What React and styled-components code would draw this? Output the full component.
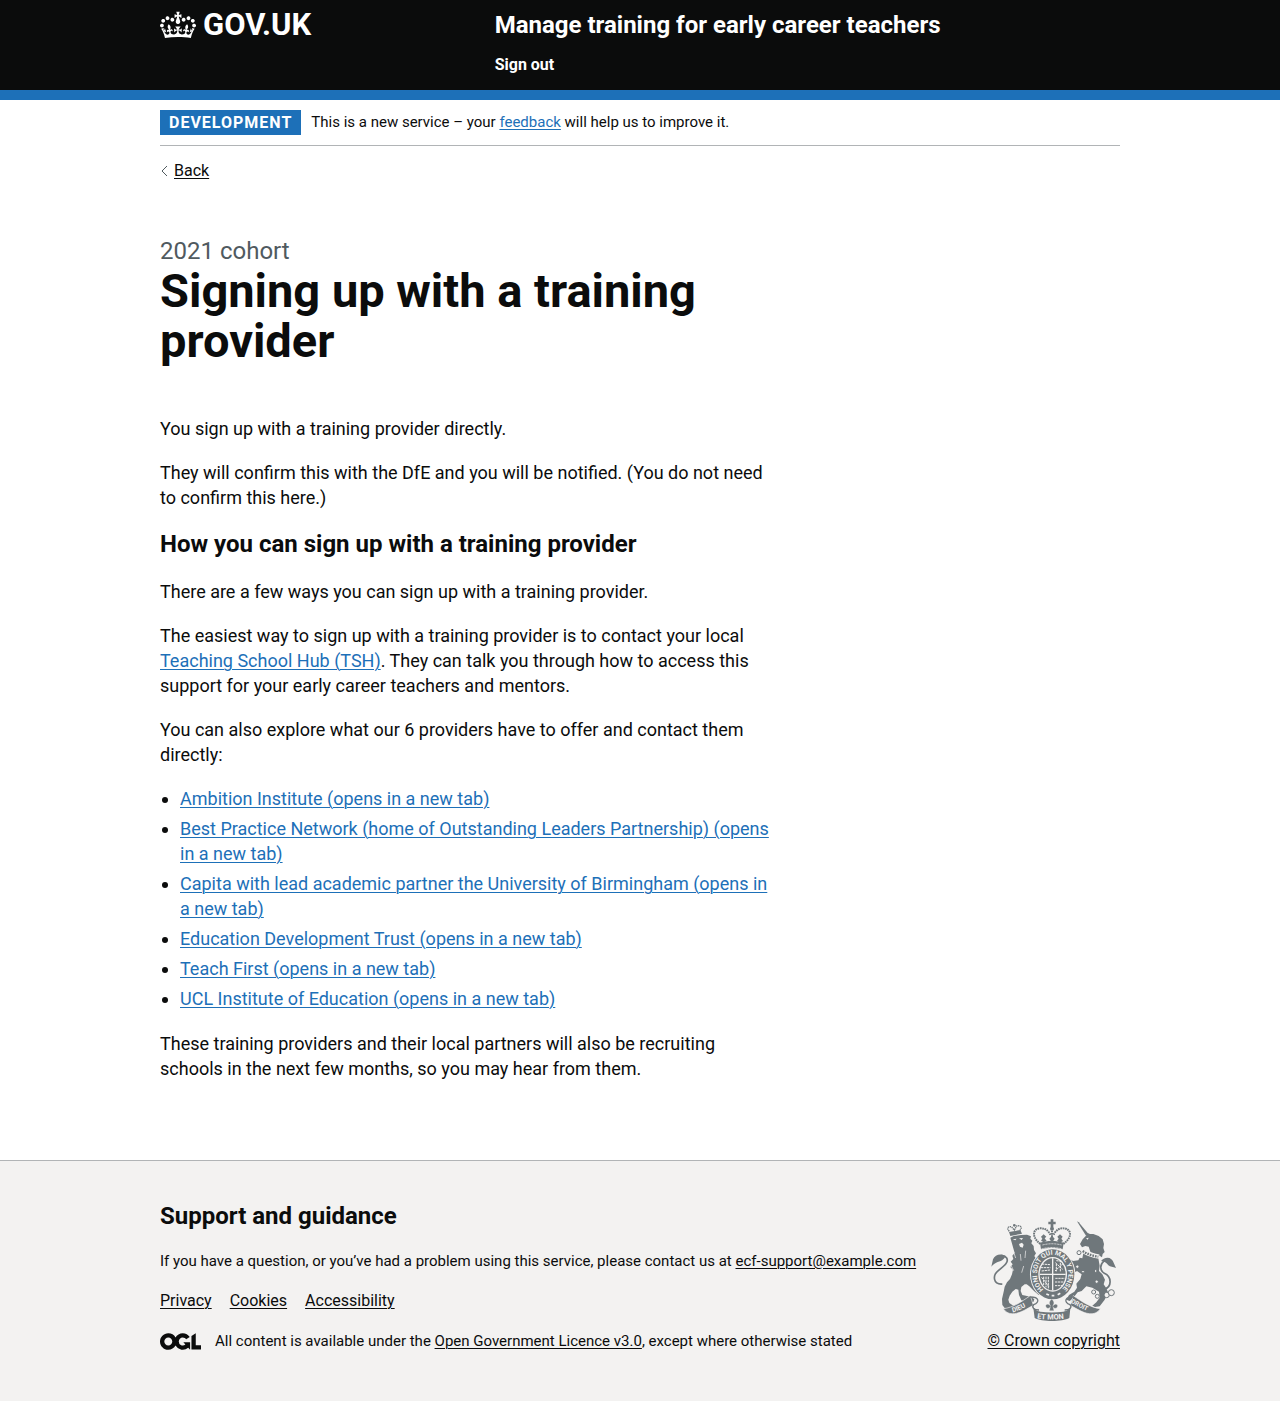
import React from "react";
import styled, { createGlobalStyle, css } from "styled-components";

const color = {
  text: "#0b0c0c",
  secondary: "#505a5f",
  link: "#1d70b8",
  border: "#b1b4b6",
  footer: "#f3f2f1",
  crest: "#6f777b",
  white: "#ffffff",
};

const GlobalStyle = createGlobalStyle`
  body {
    margin: 0;
    background: ${color.footer};
    color: ${color.text};
    font-family: Roboto, "Liberation Sans", sans-serif;
    -webkit-font-smoothing: antialiased;
  }
`;

const Container = styled.div`
  max-width: 960px;
  margin: 0 auto;
  @media (max-width: 1020px) {
    margin: 0 30px;
  }
`;

const Link = styled.a`
  color: ${(p) => (p.$dark ? color.text : color.link)};
  text-decoration: underline;
  text-decoration-thickness: 1px;
  text-underline-offset: 2px;
`;

/* Header */

const Header = styled.header`
  background: ${color.text};
  border-bottom: 10px solid ${color.link};
  color: ${color.white};
`;

const HeaderInner = styled(Container)`
  display: grid;
  grid-template-columns: 1fr 2fr;
  column-gap: 22px;
  padding: 10px 0 13px;
`;

const HomeLink = styled.a`
  display: flex;
  align-items: center;
  align-self: start;
  gap: 7px;
  height: 30px;
  color: inherit;
  font-size: 31px;
  font-weight: 700;
  line-height: 30px;
  text-decoration: none;
`;

const ServiceName = styled.a`
  display: block;
  margin-bottom: 12px;
  color: inherit;
  font-size: 24px;
  font-weight: 700;
  line-height: 30px;
  text-decoration: none;
`;

const HeaderNav = styled.nav`
  line-height: 25px;
  a {
    color: inherit;
    font-size: 16px;
    font-weight: 700;
    text-decoration: none;
  }
`;

/* Page */

const Page = styled.div`
  background: ${color.white};
`;

const PhaseBanner = styled.div`
  display: flex;
  align-items: flex-start;
  gap: 10px;
  padding: 10px 0;
  border-bottom: 1px solid ${color.border};
  font-size: 15px;
  line-height: 24px;
`;

const Tag = styled.strong`
  padding: 3px 9px 2px;
  background: ${color.link};
  color: ${color.white};
  font-size: 16px;
  font-weight: 700;
  letter-spacing: 1px;
  line-height: 20px;
  text-transform: uppercase;
`;

const BackLink = styled.a`
  display: inline-flex;
  align-items: center;
  gap: 6px;
  margin-top: 15px;
  color: ${color.text};
  font-size: 16px;
  line-height: 20px;
  text-decoration: none;
  svg {
    display: block;
  }
  span {
    text-decoration: underline;
    text-decoration-thickness: 1px;
    text-underline-offset: 2px;
  }
`;

const Main = styled.main`
  max-width: 620px;
  padding: 55px 0 60px;
`;

const Caption = styled.span`
  display: block;
  color: ${color.secondary};
  font-size: 24px;
  line-height: 30px;
`;

const Title = styled.h1`
  margin: 0 0 50px;
  font-size: 47px;
  font-weight: 700;
  line-height: 50px;
`;

const Heading = styled.h2`
  margin: 0 0 20px;
  font-size: 24px;
  font-weight: 700;
  line-height: 30px;
`;

const body = css`
  font-size: 18px;
  line-height: 25px;
`;

const Paragraph = styled.p`
  ${body}
  margin: 0 0 19px;
`;

const List = styled.ul`
  ${body}
  margin: 0 0 20px;
  padding: 0 0 0 20px;
`;

const Item = styled.li`
  & + & {
    margin-top: 5px;
  }
`;

/* Footer */

const Footer = styled.footer`
  border-top: 1px solid ${color.border};
  background: ${color.footer};
  padding: 40px 0 50px;
  font-size: 15px;
  line-height: 20px;
`;

const FooterInner = styled(Container)`
  display: flex;
  align-items: flex-end;
  justify-content: space-between;
  gap: 30px;
`;

const FooterText = styled.p`
  margin: 0 0 20px;
`;

const FooterLinks = styled.ul`
  display: flex;
  gap: 18px;
  margin: 0 0 20px;
  padding: 0;
  font-size: 16px;
  list-style: none;
`;

const Licence = styled.div`
  display: flex;
  align-items: center;
  gap: 14px;
`;

const Copyright = styled(Link)`
  display: flex;
  flex-direction: column;
  align-items: center;
  gap: 10px;
  font-size: 16px;
  white-space: nowrap;
`;

function Crown() {
  return (
    <svg width="36" height="30" viewBox="0 0 132 97" aria-hidden="true">
      <path
        fill="currentColor"
        fillRule="evenodd"
        d="M25 30.2c3.5 1.5 7.7-.2 9.1-3.7 1.5-3.6-.2-7.8-3.9-9.2-3.6-1.4-7.6.3-9.1 3.9-1.4 3.5.3 7.5 3.9 9zM9 39.5c3.6 1.5 7.8-.2 9.2-3.7 1.5-3.6-.2-7.8-3.9-9.1-3.6-1.5-7.6.2-9.1 3.8-1.4 3.5.3 7.5 3.8 9zM4.4 57.2c3.5 1.5 7.7-.2 9.1-3.8 1.5-3.6-.2-7.7-3.9-9.1-3.5-1.5-7.6.3-9.1 3.8-1.4 3.5.3 7.6 3.9 9.1zm38.3-21.4c3.5 1.5 7.7-.2 9.1-3.8 1.5-3.6-.2-7.7-3.9-9.1-3.6-1.5-7.6.3-9.1 3.8-1.3 3.6.4 7.7 3.9 9.1zm64.4-5.6c-3.6 1.5-7.8-.2-9.1-3.7-1.5-3.6.2-7.8 3.8-9.2 3.6-1.4 7.7.3 9.2 3.9 1.3 3.5-.4 7.5-3.9 9zm15.9 9.3c-3.6 1.5-7.7-.2-9.1-3.7-1.5-3.6.2-7.8 3.7-9.1 3.6-1.5 7.7.2 9.2 3.8 1.5 3.5-.3 7.5-3.8 9zm4.7 17.7c-3.6 1.5-7.8-.2-9.2-3.8-1.5-3.6.2-7.7 3.9-9.1 3.6-1.5 7.7.3 9.2 3.8 1.3 3.5-.4 7.6-3.9 9.1zM89.3 35.8c-3.6 1.5-7.8-.2-9.2-3.8-1.4-3.6.2-7.7 3.9-9.1 3.6-1.5 7.7.3 9.2 3.8 1.4 3.6-.3 7.7-3.9 9.1zM69.7 17.7l8.9 4.7V9.3l-8.9 2.8c-.2-.3-.5-.6-.9-.9L72.4 0H59.6l3.5 11.2c-.3.3-.6.5-.9.9l-8.8-2.8v13.1l8.8-4.7c.3.3.6.7.9.9l-5 15.4v.1c-.2.8-.4 1.6-.4 2.4 0 4.1 3.1 7.5 7 8.1h.2c.3 0 .7.1 1 .1.4 0 .7 0 1-.1h.2c4-.6 7.1-4.1 7.1-8.1 0-.8-.1-1.7-.4-2.4V34l-5.1-15.4c.4-.2.7-.6 1-.9zM66 92.8c16.9 0 32.8 1.1 47.1 3.2 4-16.9 8.9-26.7 14-33.5l-9.6-3.4c1 4.9 1.1 7.2 0 10.2-1.5-1.4-3-4.3-4.2-8.7L108.6 76c2.8-2 5-3.2 7.5-3.3-4.4 9.4-10 11.9-13.6 11.2-4.3-.8-6.3-4.6-5.6-7.9 1-4.7 5.7-5.9 8-.5 4.3-8.7-3-11.4-7.6-8.8 7.1-7.2 7.9-13.5 2.1-21.1-8 6.1-8.1 12.3-4.5 20.8-4.7-5.4-12.1-2.5-9.5 6.2 3.4-5.2 7.9-2 7.2 3.1-.6 4.3-6.4 7.8-13.5 7.2-10.3-.9-10.9-8-11.2-13.8 2.5-.5 7.1 1.8 11 7.3L80.2 60c-4.1 4.4-8 5.3-12.3 5.4 1.4-4.4 8-11.6 8-11.6H55.5s6.4 7.2 7.9 11.6c-4.2-.1-8-1-12.3-5.4l1.4 16.4c3.9-5.5 8.5-7.7 10.9-7.3-.3 5.8-.9 12.8-11.1 13.8-7.2.6-12.9-2.9-13.5-7.2-.7-5 3.8-8.3 7.1-3.1 2.7-8.7-4.6-11.6-9.4-6.2 3.7-8.5 3.6-14.7-4.6-20.8-5.8 7.6-5 13.9 2.2 21.1-4.7-2.6-11.9.1-7.7 8.8 2.3-5.5 7.1-4.2 8.1.5.7 3.3-1.3 7.1-5.7 7.9-3.5.7-9-1.8-13.5-11.2 2.5.1 4.7 1.3 7.5 3.3l-4.7-15.4c-1.2 4.4-2.7 7.2-4.3 8.7-1.1-3-.9-5.3 0-10.2l-9.5 3.4c5 6.9 9.9 16.7 14 33.5 14.8-2.1 30.8-3.2 47.7-3.2z"
      />
    </svg>
  );
}

function OglLogo() {
  return (
    <svg width="41" height="17" viewBox="0 0 483.2 195.7" role="img" aria-label="Open Government Licence">
      <path
        fill="currentColor"
        d="M421.5 142.8V.1l-50.7 32.3v161.1h112.4v-50.7zm-122.3-9.6A47.12 47.12 0 0 1 221 97.8c0-26 21.1-47.1 47.1-47.1 16.7 0 31.4 8.7 39.7 21.8l42.7-27.2A97.63 97.63 0 0 0 268.1 0c-36.5 0-68.3 20.1-85.1 49.7A98 98 0 0 0 97.8 0C43.9 0 0 43.9 0 97.8s43.9 97.8 97.8 97.8c36.5 0 68.3-20.1 85.1-49.7a97.76 97.76 0 0 0 149.6 25.4l19.4 22.2h3v-87.8h-80l24.3 27.5zM97.8 145c-26 0-47.1-21.1-47.1-47.1s21.1-47.1 47.1-47.1 47.1 21.1 47.1 47.1S123.8 145 97.8 145"
      />
    </svg>
  );
}

function Crest() {
  const c = color.crest;
  const bg = color.footer;
  return (
    <svg width="125" height="102" viewBox="36 41 375 306" fill={c} aria-hidden="true">
      {/* lion */}
      <path d="M94 97l10-5 22-3 18-1 12 5-2 7 6 6-3 8 7 8 1 12 6 10-5 8 6 10-2 8 4 12-6 24 0 26 6 12 12 12 10 6-3 8-14-1-14-12-14-14-8-6-6 0-10 8-2 12 5 12 14 3 14 4 8 6-3 8-20-1-16-4-7-16-2-16-8-2-10 8-8 12-4 12 3 10 13 9 11 7-4 6-18 0-16-7-7-9-1-18 5-22 3-15 7-13 9-10 6-14 3-14-8-8 7-8-6-8 8-8-3-10 7-8z" />
      <path d="M101 102l12-2-4 5zM120 99l12-1-4 6zM120 116l9-4 5 6-3 9-8-3z" fill={bg} />
      <path d="M104 140l6 18M124 146l2 20M140 136l-2 22M96 180l8 16M134 182l-6 20" fill="none" stroke={bg} strokeWidth="2" />
      <path d="M70 236C42 238 40 210 58 196C78 180 90 170 83 158C77 149 63 148 52 158" fill="none" stroke={c} strokeWidth="5" />
      <path d="M80 153C66 142 48 148 42 162L37 184C43 177 50 172 56 170C66 168 74 164 80 153z" />
      {/* lion's crown */}
      <path d="M90 80l34-6 5 11-35 7z" />
      <path d="M91 78C82 69 88 61 98 65L106 74L113 62C125 59 131 66 123 74" fill="none" stroke={c} strokeWidth="4" strokeDasharray="4 2" />
      <circle cx="106" cy="60" r="4" />
      {/* unicorn */}
      <path d="M294 48l5 3 29 34-7 6z" />
      <path d="M303 116l8-14 10-11 5-8 7 3 10 0 16 6 12 10 4 14-2 12 4 12-6 6-2 10-12-8-22-6-6-18-10-2-10 4z" />
      <path d="M321 99l8-2-3 6z" fill={bg} />
      <path d="M314 139l24 6 20 14 4 22-2 16 10 10 8 16-4 14 8 12 6 14-12 22-14 18-14 2-8-4 12-10 10-14-2-18-20-12-18-4-14 14-12 4-14 18-10 8-10-4 8-14 16-10 8-12-2-12 12-14 4-14-14-10-10 6-10-8-10 2-8-8 12-2 8-14-12 2-6-10 14-4 10 6 16-2 4-8 8 2z" />
      <path d="M311 136C326 146 344 151 360 154" fill="none" stroke={bg} strokeWidth="13" />
      <path d="M311 137C326 147 342 152 358 154" fill="none" stroke={c} strokeWidth="7" strokeDasharray="5 3" />
      <g fill={bg} stroke={c} strokeWidth="3">
        <circle cx="300" cy="142" r="6" />
        <circle cx="295" cy="184" r="5" />
        <circle cx="312" cy="199" r="4" />
        <circle cx="350" cy="197" r="4" />
        <circle cx="353" cy="229" r="5" />
        <circle cx="344" cy="260" r="6" />
        <circle cx="355" cy="273" r="6" />
        <circle cx="383" cy="269" r="8" />
        <circle cx="397" cy="262" r="9" />
      </g>
      <path d="M376 252C400 244 398 214 376 204C362 196 362 178 374 168C384 160 396 166 398 176" fill="none" stroke={c} strokeWidth="5" />
      <path d="M366 167C382 150 400 158 404 172L411 188C402 184 394 186 388 180C382 172 376 168 366 167z" />
      {/* garter and shield */}
      <ellipse cx="221" cy="207" rx="68" ry="77" fill={bg} />
      <ellipse cx="221" cy="207" rx="65" ry="75" />
      <ellipse cx="221" cy="207" rx="43" ry="52" fill={bg} />
      <ellipse cx="221" cy="207" rx="39" ry="48" />
      <path
        d="M188 176l25 2M186 187h28M188 197l25-3M229 172l22 20M252 175l-24 22M232 166l18 2M244 164v34M232 176v22M188 216l22 28M194 214v26M201 214v32M208 214v38M229 219h28M228 230h27M228 241h22"
        fill="none"
        stroke={bg}
        strokeWidth="3"
        strokeDasharray="7 2"
      />
      <path d="M221 159v96M182 207h78" fill="none" stroke={bg} strokeWidth="4" />
      <path id="garter" d="M194 252A47 57 0 1 1 248 252" fill="none" />
      <text fill={bg} fontSize="20" fontWeight="700">
        <textPath href="#garter">HONI SOIT QUI MAL Y PENSE</textPath>
      </text>
      <path d="M202 266l8 3M218 271l8 0M236 268l8-4" stroke={bg} strokeWidth="5" />
      {/* central crown */}
      <path d="M215 42h8v7h7v8h-7v9h-8v-9h-7v-8h7z" />
      <circle cx="219" cy="70" r="6" />
      <path
        d="M184 116C154 92 164 69 184 69C201 68 211 80 215 90M253 116C285 92 274 69 253 69C237 68 227 80 223 90M219 76v26"
        fill="none"
        stroke={c}
        strokeWidth="6"
        strokeDasharray="5 2"
      />
      <path d="M186 94l8-7 8 7-5 5 6 8-9 4-8-5 4-6zM235 94l8-7 8 7-4 6 5 7-9 5-9-5 5-7zM211 100l8-9 8 9-4 6 5 8h-18l5-8z" />
      <path d="M183 112C204 105 232 105 254 112L251 132C230 126 208 126 186 132z" />
      <path d="M190 119C210 114 228 114 248 119M187 131C208 125 230 125 250 131" fill="none" stroke={bg} strokeWidth="2" strokeDasharray="7 2" />
      {/* motto ribbon */}
      <g stroke={bg} strokeWidth="2">
        <path d="M73 310C102 307 126 290 154 271L163 300C142 311 126 323 106 325C92 327 80 321 73 310z" />
        <path d="M364 310C335 307 311 290 283 271L274 300C295 311 311 323 331 325C345 327 357 321 364 310z" />
      </g>
      <path d="M152 275C180 274 184 290 164 298C158 304 162 314 180 314M285 275C257 274 253 290 273 298C279 304 275 314 257 314" fill="none" stroke={c} strokeWidth="4" />
      <path d="M162 300C164 312 172 317 184 319C206 322 231 322 253 319C265 317 273 312 275 300L271 338C250 350 188 350 167 338z" />
      <path id="motto-left" d="M101 321C122 316 138 305 160 294" fill="none" />
      <path id="motto-mid" d="M174 339C198 344 240 344 268 338" fill="none" />
      <path id="motto-right" d="M275 292C298 303 314 315 338 322" fill="none" />
      <g fill={bg} fontWeight="700">
        <text fontSize="20"><textPath href="#motto-left">DIEU</textPath></text>
        <text fontSize="22"><textPath href="#motto-mid">ET MON</textPath></text>
        <text fontSize="19"><textPath href="#motto-right">DROIT</textPath></text>
      </g>
      {/* fleur-de-lis */}
      <path
        d="M218 281C207 291 212 298 215 302C207 292 197 297 201 305C204 311 212 309 214 304L211 316h14L222 304C224 309 232 311 235 305C239 297 229 292 221 302C224 298 229 291 218 281z"
        stroke={bg}
        strokeWidth="1"
      />
    </svg>
  );
}

const providers = [
  "Ambition Institute",
  "Best Practice Network (home of Outstanding Leaders Partnership)",
  "Capita with lead academic partner the University of Birmingham",
  "Education Development Trust",
  "Teach First",
  "UCL Institute of Education",
];

export default function App() {
  return (
    <>
      <GlobalStyle />
      <Header>
        <HeaderInner>
          <HomeLink href="#">
            <Crown />
            <span>GOV.UK</span>
          </HomeLink>
          <div>
            <ServiceName href="#">Manage training for early career teachers</ServiceName>
            <HeaderNav>
              <a href="#">Sign out</a>
            </HeaderNav>
          </div>
        </HeaderInner>
      </Header>

      <Page>
        <Container>
          <PhaseBanner>
            <Tag>Development</Tag>
            <span>
              This is a new service – your <Link href="#">feedback</Link> will help us to improve it.
            </span>
          </PhaseBanner>
          <BackLink href="#">
            <svg width="8" height="12" viewBox="0 0 8 12" fill="none" stroke={color.secondary} aria-hidden="true">
              <path d="M7 1L2 6l5 5" />
            </svg>
            <span>Back</span>
          </BackLink>

          <Main>
            <Caption>2021 cohort</Caption>
            <Title>Signing up with a training provider</Title>
            <Paragraph>You sign up with a training provider directly.</Paragraph>
            <Paragraph>
              They will confirm this with the DfE and you will be notified. (You do not need to confirm this here.)
            </Paragraph>
            <Heading>How you can sign up with a training provider</Heading>
            <Paragraph>There are a few ways you can sign up with a training provider.</Paragraph>
            <Paragraph>
              The easiest way to sign up with a training provider is to contact your local{" "}
              <Link href="#">Teaching School Hub (TSH)</Link>. They can talk you through how to access this support for
              your early career teachers and mentors.
            </Paragraph>
            <Paragraph>
              You can also explore what our 6 providers have to offer and contact them directly:
            </Paragraph>
            <List>
              {providers.map((name) => (
                <Item key={name}>
                  <Link href="#">{`${name} (opens in a new tab)`}</Link>
                </Item>
              ))}
            </List>
            <Paragraph>
              These training providers and their local partners will also be recruiting schools in the next few months,
              so you may hear from them.
            </Paragraph>
          </Main>
        </Container>
      </Page>

      <Footer>
        <FooterInner>
          <div>
            <Heading>Support and guidance</Heading>
            <FooterText>
              If you have a question, or you’ve had a problem using this service, please contact us at{" "}
              <Link $dark href="#">ecf-support@example.com</Link>
            </FooterText>
            <FooterLinks>
              <li><Link $dark href="#">Privacy</Link></li>
              <li><Link $dark href="#">Cookies</Link></li>
              <li><Link $dark href="#">Accessibility</Link></li>
            </FooterLinks>
            <Licence>
              <OglLogo />
              <span>
                All content is available under the <Link $dark href="#">Open Government Licence v3.0</Link>, except
                where otherwise stated
              </span>
            </Licence>
          </div>
          <Copyright $dark href="#">
            <Crest />
            <span>© Crown copyright</span>
          </Copyright>
        </FooterInner>
      </Footer>
    </>
  );
}
